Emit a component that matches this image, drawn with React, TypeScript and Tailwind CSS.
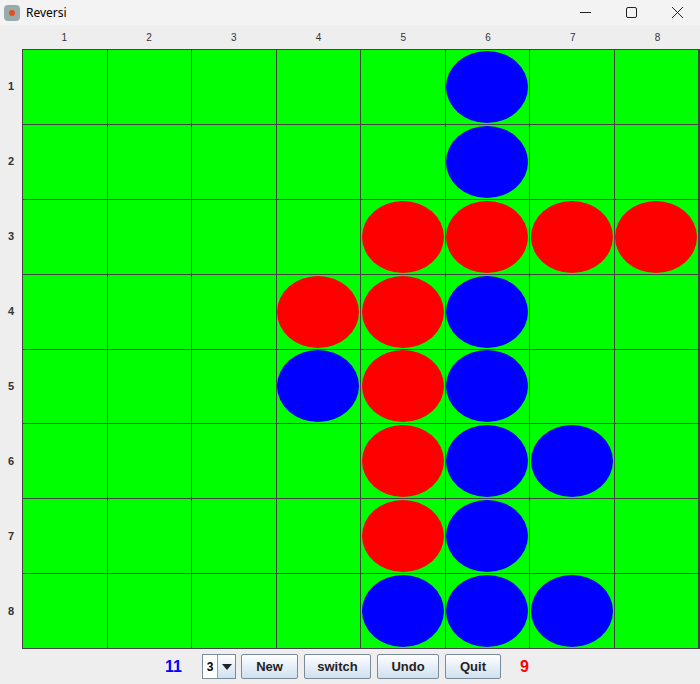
import React from 'react';

const board = [
  '.....B..',
  '.....B..',
  '....RRRR',
  '...RRB..',
  '...BRB..',
  '....RBB.',
  '....RB..',
  '....BBB.',
];

const Btn = ({ label, w }: { label: string; w: string }) => (
  <div
    className={`${w} h-[25px] flex items-center justify-center border border-[#7a8a99] rounded-[2px] bg-gradient-to-b from-white to-[#cfe0f0] text-[13px] font-bold text-[#222]`}
  >
    {label}
  </div>
);

const App = () => {
  return (
    <div className="w-[700px] h-[684px] bg-[#eeeeee] flex flex-col" style={{ fontFamily: '"Liberation Sans", Arial, sans-serif' }}>
      <div className="h-[25px] bg-[#f3f3f3] flex items-center">
        <div className="w-[16px] h-[16px] ml-[4px] mr-[6px] bg-[#9aa] rounded-sm flex items-center justify-center">
          <div className="w-[6px] h-[6px] bg-[#e05020] rounded-full" />
        </div>
        <div className="text-[12px] text-black" style={{ fontFamily: '"Noto Sans", sans-serif' }}>Reversi</div>
        <div className="ml-auto flex items-center text-[#222]">
          <div className="w-[46px] flex justify-center">
            <svg width="11" height="11" viewBox="0 0 11 11"><path d="M0 5.5h11" stroke="#222" strokeWidth="1" /></svg>
          </div>
          <div className="w-[46px] flex justify-center">
            <svg width="11" height="11" viewBox="0 0 11 11"><rect x="0.5" y="0.5" width="10" height="10" rx="1.5" fill="none" stroke="#222" strokeWidth="1" /></svg>
          </div>
          <div className="w-[46px] flex justify-center">
            <svg width="11" height="11" viewBox="0 0 11 11"><path d="M0 0L11 11M11 0L0 11" stroke="#222" strokeWidth="1" /></svg>
          </div>
        </div>
      </div>
      <div className="h-[24px] flex pl-[22px]">
        {[1, 2, 3, 4, 5, 6, 7, 8].map((n) => (
          <div key={n} className="flex-1 flex items-center justify-center text-[10px] text-[#333]">{n}</div>
        ))}
      </div>
      <div className="flex">
        <div className="w-[22px] h-[600px] flex flex-col">
          {[1, 2, 3, 4, 5, 6, 7, 8].map((n) => (
            <div key={n} className="flex-1 flex items-center justify-center text-[11px] font-bold text-[#333]">{n}</div>
          ))}
        </div>
        <div className="w-[678px] h-[600px] bg-[#444] p-[1px] pr-[2px] grid grid-cols-8 grid-rows-8 gap-[1px]">
          {board.flatMap((row, r) =>
            row.split('').map((c, i) => (
              <div key={`${r}-${i}`} className="bg-[#00ff00] flex items-center justify-center">
                {c !== '.' && (
                  <div className={`w-[82px] h-[72px] rounded-[50%] ${c === 'R' ? 'bg-[#ff0000]' : 'bg-[#0000ff]'}`} />
                )}
              </div>
            ))
          )}
        </div>
      </div>
      <div className="flex-1 flex items-center pl-[165px]">
        <div className="w-[37px] text-[16px] font-bold text-[#0000ff]">11</div>
        <div className="w-[34px] h-[25px] flex border border-[#7a8a99] bg-white">
          <div className="w-[14px] text-[12px] font-bold flex items-center justify-center">3</div>
          <div className="flex-1 border-l border-[#99a] bg-gradient-to-b from-white to-[#cfe0f0] flex items-center justify-center">
            <svg width="10" height="6" viewBox="0 0 10 6"><path d="M0 0h10L5 6z" fill="#222" /></svg>
          </div>
        </div>
        <div className="w-[5px]" />
        <Btn label="New" w="w-[57px]" />
        <div className="w-[6px]" />
        <Btn label="switch" w="w-[67px]" />
        <div className="w-[6px]" />
        <Btn label="Undo" w="w-[62px]" />
        <div className="w-[6px]" />
        <Btn label="Quit" w="w-[56px]" />
        <div className="ml-[19px] text-[16px] font-bold text-[#ff0000]">9</div>
      </div>
    </div>
  );
};

export default App;
